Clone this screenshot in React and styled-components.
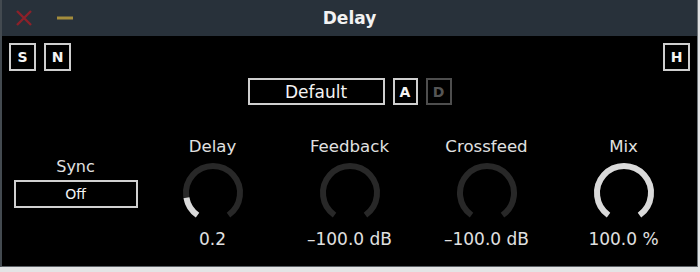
import React from "react";
import styled, { createGlobalStyle } from "styled-components";

const Global = createGlobalStyle`
  html, body { margin: 0; padding: 0; background: #e3e4e5; }
  body { font-family: "DejaVu Sans", "Liberation Sans", sans-serif; }
`;

const Window = styled.div`
  width: 695px;
  height: 266px;
  border-left: 2px solid #434a50;
  border-bottom: 1px solid #5c6166;
  border-right: 1px solid #6f757a;
  background: #000;
  display: flex;
  flex-direction: column;
  overflow: hidden;
`;

const TitleBar = styled.div`
  height: 36px;
  flex: none;
  background: #28313a;
  display: flex;
  align-items: center;
  position: relative;
  padding-left: 13px;
  gap: 24px;
`;

const Title = styled.div`
  position: absolute;
  left: 0;
  right: 0;
  top: 0;
  bottom: 0;
  display: flex;
  align-items: center;
  justify-content: center;
  color: #f2f2f2;
  font-size: 17px;
  font-weight: bold;
  pointer-events: none;
`;

const WinButton = styled.svg`
  display: block;
  flex: none;
`;

const Body = styled.div`
  flex: 1;
  padding: 7px 7px 0 7px;
  display: flex;
  flex-direction: column;
`;

const TopRow = styled.div`
  display: flex;
  align-items: center;
  gap: 8px;
`;

const Spacer = styled.div`
  flex: 1;
`;

const SquareButton = styled.div`
  box-sizing: border-box;
  width: ${(p) => p.$w || 27}px;
  height: ${(p) => p.$h || 28}px;
  border: 2px solid ${(p) => (p.$dim ? "#4e4e4e" : "#cfcfcf")};
  color: ${(p) => (p.$dim ? "#555" : "#f4f4f4")};
  display: flex;
  align-items: center;
  justify-content: center;
  font-size: ${(p) => p.$fs || 14}px;
  font-weight: ${(p) => (p.$bold ? "bold" : "normal")};
  background: #000;
`;

const PresetRow = styled.div`
  display: flex;
  justify-content: center;
  align-items: center;
  gap: 8px;
  margin-top: 7px;
`;

const Controls = styled.div`
  display: grid;
  grid-template-columns: repeat(5, 137px);
  justify-content: center;
  margin-top: 32px;
`;

const Column = styled.div`
  display: flex;
  flex-direction: column;
  align-items: center;
  padding-top: ${(p) => p.$top || 0}px;
`;

const Label = styled.div`
  color: #e0e0e0;
  font-size: ${(p) => p.$fs || 16.6}px;
  line-height: 20px;
  white-space: nowrap;
`;

const Value = styled(Label)`
  margin-top: 4px;
  font-size: 17px;
`;

const KnobSvg = styled.svg`
  display: block;
  margin-top: 4px;
`;

const SyncBox = styled.div`
  box-sizing: border-box;
  margin-top: 3px;
  width: 124px;
  height: 28px;
  border: 2px solid #d0d0d0;
  color: #f4f4f4;
  font-size: 14px;
  display: flex;
  align-items: center;
  justify-content: center;
`;

const START = -145;
const END = 145;

function polar(cx, cy, r, deg) {
  const a = (deg * Math.PI) / 180;
  return [cx + r * Math.sin(a), cy - r * Math.cos(a)];
}

function arcPath(cx, cy, r, a0, a1) {
  const [x0, y0] = polar(cx, cy, r, a0);
  const [x1, y1] = polar(cx, cy, r, a1);
  const large = a1 - a0 > 180 ? 1 : 0;
  return `M ${x0} ${y0} A ${r} ${r} 0 ${large} 1 ${x1} ${y1}`;
}

function Knob({ value }) {
  const end = START + (END - START) * value;
  return (
    <KnobSvg width="64" height="64" viewBox="0 0 64 64">
      <path d={arcPath(32, 32, 27, START, END)} fill="none" stroke="#282828" strokeWidth="6" />
      {value > 0 && (
        <path d={arcPath(32, 32, 27, START, end)} fill="none" stroke="#dadada" strokeWidth="6" />
      )}
    </KnobSvg>
  );
}

function KnobControl({ label, value, display }) {
  return (
    <Column>
      <Label>{label}</Label>
      <Knob value={value} />
      <Value>{display}</Value>
    </Column>
  );
}

export default function App() {
  return (
    <>
      <Global />
      <Window>
        <TitleBar>
          <WinButton width="18" height="16" viewBox="0 0 18 16">
            <path d="M2 1 L16 15 M16 1 L2 15" stroke="#8c2129" strokeWidth="2.4" />
          </WinButton>
          <WinButton width="16" height="4" viewBox="0 0 16 4">
            <rect x="0" y="0.5" width="16" height="3" fill="#a48d3c" />
          </WinButton>
          <Title>Delay</Title>
        </TitleBar>
        <Body>
          <TopRow>
            <SquareButton $bold>S</SquareButton>
            <SquareButton $bold>N</SquareButton>
            <Spacer />
            <SquareButton $bold>H</SquareButton>
          </TopRow>
          <PresetRow>
            <SquareButton $w={137} $h={27} $fs={17}>Default</SquareButton>
            <SquareButton $w={25} $h={27} $bold>A</SquareButton>
            <SquareButton $w={26} $h={27} $bold $dim>D</SquareButton>
          </PresetRow>
          <Controls>
            <Column $top={20}>
              <Label $fs={16}>Sync</Label>
              <SyncBox>Off</SyncBox>
            </Column>
            <KnobControl label="Delay" value={0.155} display="0.2" />
            <KnobControl label="Feedback" value={0} display="–100.0 dB" />
            <KnobControl label="Crossfeed" value={0} display="–100.0 dB" />
            <KnobControl label="Mix" value={1} display="100.0 %" />
          </Controls>
        </Body>
      </Window>
    </>
  );
}
